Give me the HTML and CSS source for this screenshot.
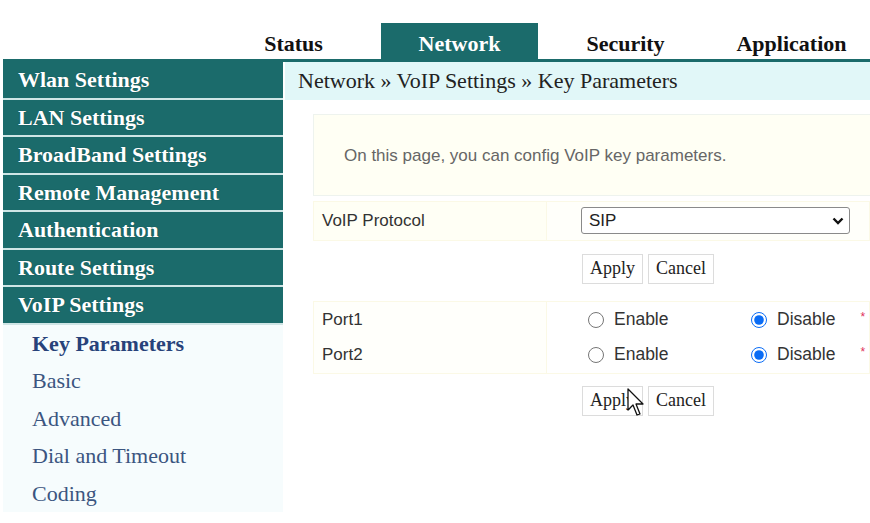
FILE: index.html
```html
<!DOCTYPE html>
<html lang="en">
<head>
    <meta charset="UTF-8">
    <meta name="viewport" content="width=device-width, initial-scale=1.0">
    <title>VoIP Key Parameters</title>
    <link rel="stylesheet" href="styles.css">
</head>
<body>
    <div class="tabs">
        <a class="tab">Status</a>
        <a class="tab active">Network</a>
        <a class="tab">Security</a>
        <a class="tab">Application</a>
    </div>

    <div class="main">
        <div class="sidebar">
            <div class="menu">Wlan Settings</div>
            <div class="menu">LAN Settings</div>
            <div class="menu">BroadBand Settings</div>
            <div class="menu">Remote Management</div>
            <div class="menu">Authentication</div>
            <div class="menu">Route Settings</div>
            <div class="menu">VoIP Settings</div>
            <div class="submenu">
                <div class="sub current">Key Parameters</div>
                <div class="sub">Basic</div>
                <div class="sub">Advanced</div>
                <div class="sub">Dial and Timeout</div>
                <div class="sub">Coding</div>
            </div>
        </div>

        <div class="content">
            <div class="crumb">Network &raquo; VoIP Settings &raquo; Key Parameters</div>

            <div class="info">On this page, you can config VoIP key parameters.</div>

            <div class="row">
                <div class="label">VoIP Protocol</div>
                <div class="value">
                    <span class="select-wrap">
                        <select class="proto">
                            <option>SIP</option>
                            <option>H.248</option>
                        </select>
                        <svg class="chevron" width="12" height="8" viewBox="0 0 12 8">
                            <path d="M1.5 1.5 L6 6 L10.5 1.5" fill="none" stroke="#111" stroke-width="2.4"/>
                        </svg>
                    </span>
                </div>
            </div>
            <div class="buttons">
                <button type="button">Apply</button>
                <button type="button">Cancel</button>
            </div>

            <div class="ports">
                <div class="row port">
                    <div class="label">Port1</div>
                    <div class="value">
                        <label class="opt"><input type="radio" name="port1">Enable</label>
                        <label class="opt"><input type="radio" name="port1" checked>Disable</label>
                        <span class="req">*</span>
                    </div>
                </div>
                <div class="row port">
                    <div class="label">Port2</div>
                    <div class="value">
                        <label class="opt"><input type="radio" name="port2">Enable</label>
                        <label class="opt"><input type="radio" name="port2" checked>Disable</label>
                        <span class="req">*</span>
                    </div>
                </div>
            </div>
            <div class="buttons second">
                <button type="button">Apply</button>
                <button type="button">Cancel</button>
                <svg class="cursor" width="20" height="30" viewBox="0 0 20 30">
                    <path d="M1 1 L1 22 L6 17 L10 27 L13 26 L9 16 L16 16 Z" fill="#fff" stroke="#111" stroke-width="1.3" stroke-linejoin="round"/>
                </svg>
            </div>
        </div>
    </div>
</body>
</html>
```

FILE: styles.css
```css
body { margin: 0; background: #fff; font-family: "Liberation Serif", "Times New Roman", serif; }

.tabs { display: flex; gap: 9px; margin: 23px 0 0 3px; padding-left: 212px; border-bottom: 3px solid #1b6b6b; }
.tab { width: 158px; height: 30px; padding-top: 6px; line-height: 30px; text-align: center; font-size: 22px; font-weight: bold; color: #111; }
.tab.active { background: #1b6b6b; color: #fff; }

.main { display: flex; gap: 2px; margin-left: 3px; }
.sidebar { width: 280px; flex: none; }
.menu { height: 35.5px; line-height: 36px; padding-left: 15px; border-bottom: 2px solid #cfe5e5; background: #1b6b6b; color: #fff; font-size: 22px; font-weight: bold; text-shadow: 0 0 1px #0d4444; }
.submenu { background: #f6fcfd; }
.sub { height: 37.5px; line-height: 38px; padding-left: 29px; font-size: 22px; color: #3b5580; }
.sub.current { font-weight: bold; color: #27427a; }

.content { flex: 1; min-width: 0; overflow: hidden; }
.crumb { height: 37.5px; line-height: 38px; padding-left: 13px; background: #e1f7f8; font-size: 22px; color: #222; }

.info { margin: 14px 0 0 28px; height: 80px; line-height: 82px; padding-left: 30px; background: #fffff4; border: 1px solid #eef3ee; border-right: none; font-family: "Liberation Sans", Arial, sans-serif; font-size: 17px; color: #666; }

.row { display: grid; grid-template-columns: 234px 1fr; margin-left: 28px; height: 38px; margin-top: 5px; font-family: "Liberation Sans", Arial, sans-serif; font-size: 17px; color: #333; }
.row .label { padding-left: 8px; line-height: 38px; background: #fffff5; border: 1px solid #fbf9e6; }
.row .value { display: flex; align-items: center; padding-left: 34px; background: #fffffa; border: 1px solid #fbf9e6; border-left: none; }

.select-wrap { position: relative; display: inline-block; height: 27px; }
.proto { appearance: none; width: 269px; height: 27px; font-family: "Liberation Sans", Arial, sans-serif; font-size: 17px; color: #222; border: 1px solid #8a8a8a; border-radius: 3px; background: #fff; padding-left: 7px; }
.chevron { position: absolute; right: 6px; top: 10px; pointer-events: none; }

.buttons { position: relative; display: flex; gap: 5px; margin: 15px 0 0 297px; height: 30px; }
.buttons button { height: 30px; padding: 0 7px; background: #fff; border: 1px solid #dcdcdc; font-family: "Liberation Serif", "Times New Roman", serif; font-size: 18px; color: #222; }
.buttons.second { margin-top: 13px; }

.ports { margin-top: 17px; }
.row.port { margin-top: 0; height: 36px; }
.row.port .label { line-height: 36px; background: #fffffb; }
.row.port .value { padding-left: 41px; background: #fff; }
.row.port + .row.port .label, .row.port + .row.port .value { border-top: none; }

.opt { display: flex; align-items: center; gap: 10px; color: #333; font-size: 17.5px; }
.opt:first-child { width: 163px; }
.opt input { width: 16px; height: 16px; margin: 0; accent-color: #0a6cf5; }
.req { color: #e0305a; font-size: 12px; margin-left: 25px; align-self: flex-start; margin-top: 8px; }

.cursor { position: absolute; left: 45px; top: 2px; }
```
